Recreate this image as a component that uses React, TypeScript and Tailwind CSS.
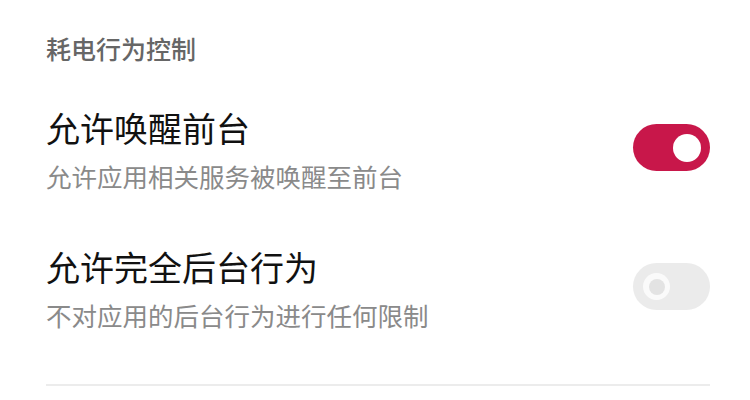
import React from "react";

const font = { fontFamily: '"Noto Sans CJK SC", "Noto Sans", sans-serif' };

function Toggle({ on }: { on: boolean }) {
  if (on) {
    return (
      <div className="w-[77px] h-[47px] rounded-full bg-[#c8174a] flex items-center justify-end pr-[9px] shrink-0 mb-[5px]">
        <div className="w-[28px] h-[28px] rounded-full bg-white" />
      </div>
    );
  }
  return (
    <div className="w-[77px] h-[47px] rounded-full bg-[#ebebeb] flex items-center pl-[10px] shrink-0 mb-[5px]">
      <div className="w-[27px] h-[27px] rounded-full bg-[#fafafa] flex items-center justify-center">
        <div className="w-[16px] h-[16px] rounded-full bg-[#e3e3e3]" />
      </div>
    </div>
  );
}

function Row({ title, sub, on }: { title: string; sub: string; on: boolean }) {
  return (
    <div className="flex items-center justify-between">
      <div className="flex flex-col gap-[4px]">
        <div className="text-[34px] leading-[48px] text-[#111111]">{title}</div>
        <div className="text-[25.5px] leading-[40px] text-[#8a8a8a]">{sub}</div>
      </div>
      <Toggle on={on} />
    </div>
  );
}

export default function App() {
  return (
    <div className="w-[750px] h-[400px] bg-white overflow-hidden" style={font}>
      <div className="pl-[46px] pr-[40px] pt-[32px]">
        <div className="text-[25px] leading-[32px] text-[#666666] font-medium">耗电行为控制</div>
        <div className="mt-[40px]">
          <Row title="允许唤醒前台" sub="允许应用相关服务被唤醒至前台" on={true} />
        </div>
        <div className="mt-[47px]">
          <Row title="允许完全后台行为" sub="不对应用的后台行为进行任何限制" on={false} />
        </div>
        <div className="mt-[49px] h-[2px] bg-[#ececec]" />
      </div>
    </div>
  );
}
